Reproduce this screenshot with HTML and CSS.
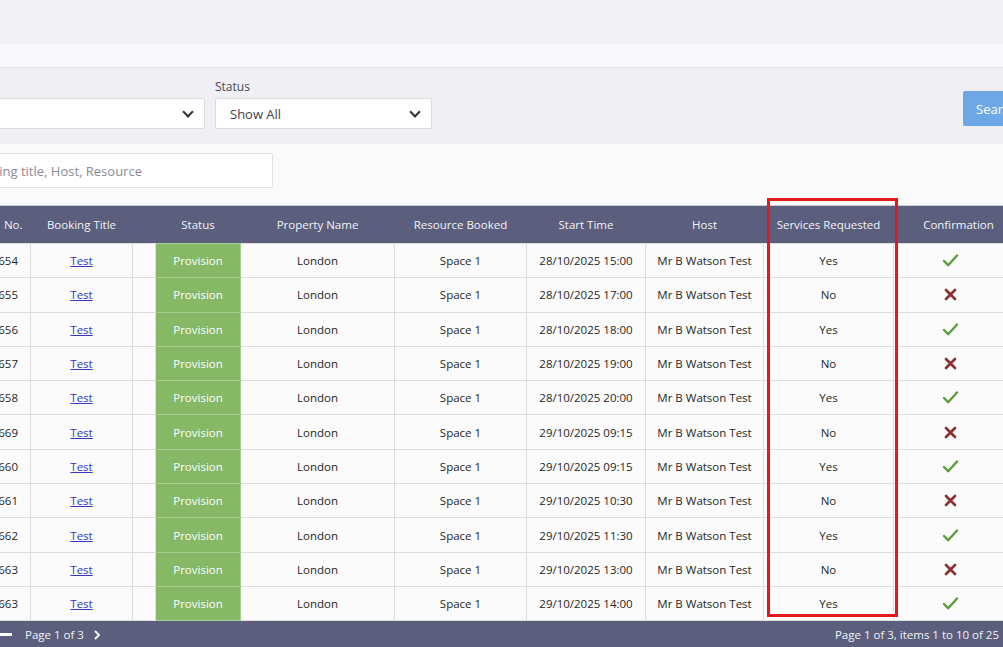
FILE: index.html
```html
<!DOCTYPE html>
<html lang="en">
<head>
  <meta charset="UTF-8">
  <meta name="viewport" content="width=device-width, initial-scale=1.0">
  <title>Bookings</title>
  <link rel="stylesheet" href="styles.css">
</head>
<body>
  <div class="page">
    <div class="topbar"></div>
    <div class="strip"></div>

    <div class="filters">
      <div class="field">
        <label>Site</label>
        <div class="select select-wide"><span class="select-value">All</span><span class="chevron"></span></div>
      </div>
      <div class="field">
        <label>Status</label>
        <div class="select select-status"><span class="select-value">Show All</span><span class="chevron"></span></div>
      </div>
      <button class="search-btn">Search</button>
    </div>

    <div class="search-row">
      <input type="text" class="search-input" placeholder="Search by Booking title, Host, Resource">
    </div>

    <div class="table-wrap">
      <table class="bookings">
        <colgroup>
          <col style="width:90px">
          <col style="width:102px">
          <col style="width:23px">
          <col style="width:85px">
          <col style="width:154px">
          <col style="width:132px">
          <col style="width:119px">
          <col style="width:118px">
          <col style="width:130px">
          <col style="width:130px">
        </colgroup>
        <thead>
          <tr>
            <th class="num">Booking No.</th>
            <th>Booking Title</th>
            <th></th>
            <th>Status</th>
            <th>Property Name</th>
            <th>Resource Booked</th>
            <th>Start Time</th>
            <th>Host</th>
            <th>Services Requested</th>
            <th>Confirmation</th>
          </tr>
        </thead>
        <tbody id="rows"></tbody>
      </table>

      <div class="pager">
        <div class="pager-left">
          <span class="pager-dash"></span>
          <span>Page 1 of 3</span>
          <svg class="pager-next" width="10" height="12" viewBox="0 0 10 12"><path d="M3 2 L7 6 L3 10" fill="none" stroke="#fff" stroke-width="1.8"/></svg>
        </div>
        <div class="pager-right">Page 1 of 3, items 1 to 10 of 25</div>
      </div>

      <div class="highlight"></div>
    </div>
  </div>

  <script>
    const bookings = [
      ['654', '28/10/2025 15:00', true],
      ['655', '28/10/2025 17:00', false],
      ['656', '28/10/2025 18:00', true],
      ['657', '28/10/2025 19:00', false],
      ['658', '28/10/2025 20:00', true],
      ['669', '29/10/2025 09:15', false],
      ['660', '29/10/2025 09:15', true],
      ['661', '29/10/2025 10:30', false],
      ['662', '29/10/2025 11:30', true],
      ['663', '29/10/2025 13:00', false],
      ['663', '29/10/2025 14:00', true]
    ];

    const tick = '<svg width="17" height="15" viewBox="0 0 17 15"><path d="M2 8 L6.2 12.2 L15 2.5" fill="none" stroke="#5b9d3b" stroke-width="2.4" stroke-linecap="round" stroke-linejoin="round"/></svg>';
    const cross = '<svg width="13" height="13" viewBox="0 0 13 13"><path d="M2 2 L11 11 M11 2 L2 11" fill="none" stroke="#8c2f33" stroke-width="2.7" stroke-linecap="round"/></svg>';

    const tbody = document.getElementById('rows');
    bookings.forEach(([no, start, yes]) => {
      const tr = document.createElement('tr');
      tr.innerHTML =
        '<td class="num">BK00' + no + '</td>' +
        '<td><a href="#">Test</a></td>' +
        '<td></td>' +
        '<td class="status">Provision</td>' +
        '<td>London</td>' +
        '<td>Space 1</td>' +
        '<td>' + start + '</td>' +
        '<td>Mr B Watson Test</td>' +
        '<td>' + (yes ? 'Yes' : 'No') + '</td>' +
        '<td class="icon">' + (yes ? tick : cross) + '</td>';
      tbody.appendChild(tr);
    });
  </script>
</body>
</html>
```

FILE: styles.css
```css
body {
  font-family: 'Open Sans', 'Liberation Sans', Arial, sans-serif;
  margin: 0;
  padding: 0;
  background-color: #FAFAFB;
  color: #262626;
  overflow: hidden;
  width: 1003px;
  height: 647px;
}

.page {
  margin-left: -107px;
  width: 1170px;
}

.topbar {
  height: 44px;
  background-color: #F2F2F6;
}

.strip {
  height: 23px;
  background-color: #F9F9FB;
}

.filters {
  display: flex;
  align-items: flex-end;
  gap: 10px;
  height: 77px;
  box-sizing: border-box;
  padding: 12px 20px 15px 67px;
  background-color: #EFEFF4;
  border-top: 1px solid #E3E3EA;
}

.field {
  display: flex;
  flex-direction: column;
}

.field label {
  font-size: 12px;
  line-height: 16px;
  color: #4A4A55;
  margin-bottom: 3px;
}

.select {
  display: flex;
  align-items: center;
  justify-content: space-between;
  height: 31px;
  box-sizing: border-box;
  padding: 0 12px 0 14px;
  background-color: #FFFFFF;
  border: 1px solid #DCDCE2;
  border-radius: 2px;
  font-size: 13px;
  color: #44444C;
}

.select-wide {
  width: 245px;
}

.select-status {
  width: 217px;
}

.chevron {
  width: 6px;
  height: 6px;
  border-right: 2px solid #333;
  border-bottom: 2px solid #333;
  transform: rotate(45deg);
  margin-top: -4px;
}

.search-btn {
  margin-left: auto;
  margin-bottom: 3px;
  width: 80px;
  height: 35px;
  border: none;
  border-radius: 2px;
  background-color: #6EA7E7;
  color: #FFFFFF;
  font-family: inherit;
  font-size: 13px;
  text-align: left;
  padding-left: 13px;
}

.search-row {
  height: 61px;
  box-sizing: border-box;
  padding-top: 9px;
}

.search-input {
  width: 380px;
  height: 35px;
  box-sizing: border-box;
  padding: 0 12px;
  border: 1px solid #E0E0E6;
  border-radius: 2px;
  background-color: #FFFFFF;
  font-family: inherit;
  font-size: 13px;
  outline: none;
}

.search-input::placeholder {
  color: #8A8A96;
}

.table-wrap {
  position: relative;
  margin-left: 47px;
  width: 1083px;
}

.bookings {
  width: 1083px;
  border-collapse: collapse;
  table-layout: fixed;
  font-size: 11.5px;
}

.bookings th {
  height: 37px;
  background-color: #5B5F7D;
  color: #F2F2F7;
  font-weight: 500;
  text-align: center;
  border-top: 1px solid #C9CAD6;
  padding: 0 4px;
  white-space: nowrap;
}

.bookings td {
  height: 33.3px;
  padding: 0 4px;
  text-align: center;
  background-color: #FBFBFB;
  border: 1px solid #DDDDDF;
  white-space: nowrap;
}

.bookings .num {
  text-align: right;
  padding-right: 12px;
}

.bookings th.num {
  padding-right: 8px;
  word-spacing: 5px;
}

.bookings td.status {
  background-color: #86B866;
  color: #FFFFFF;
  border-color: #A6CC8E;
}

.bookings td.icon {
  padding-right: 20px;
}

.bookings td.icon svg {
  display: block;
  margin: 0 auto;
}

.bookings a {
  color: #3535C8;
}

.pager {
  display: flex;
  justify-content: space-between;
  align-items: center;
  height: 27px;
  padding: 0 24px 0 58px;
  background-color: #5B5F7D;
  color: #F2F2F7;
  font-size: 11.5px;
}

.pager-left {
  display: flex;
  align-items: center;
  gap: 10px;
}

.pager-dash {
  width: 14px;
  height: 3px;
  background-color: #FFFFFF;
  margin-right: 3px;
}

.pager-next {
  margin-left: -2px;
}

.highlight {
  position: absolute;
  left: 827px;
  top: -7px;
  width: 131px;
  height: 419px;
  box-sizing: border-box;
  border: 3px solid #E3191F;
  pointer-events: none;
}
```
